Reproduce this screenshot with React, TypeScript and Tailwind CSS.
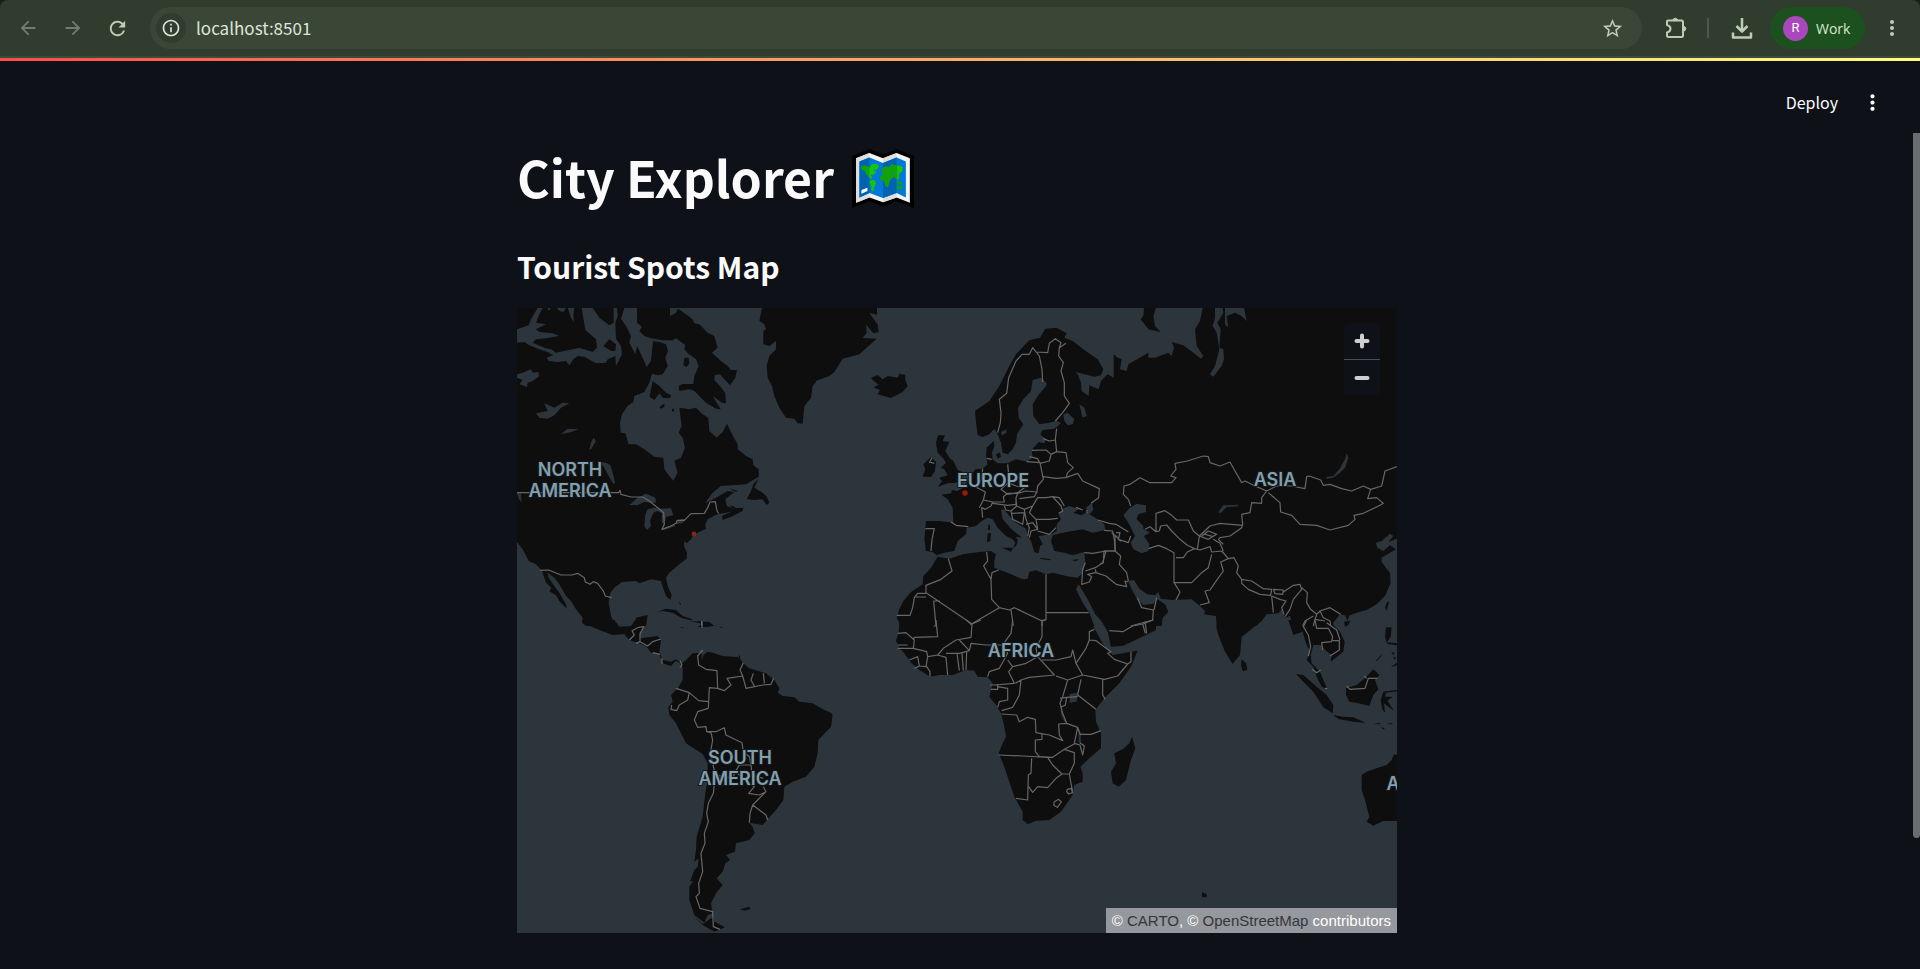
import {
  MdArrowBack,
  MdArrowForward,
  MdInfoOutline,
  MdMoreVert,
  MdRefresh,
  MdStarBorder,
} from 'react-icons/md';

type Tile = {
  x: number;
  y: number;
  land: string;
  water?: string;
  islands?: string;
  borders: string;
};

// The world map is split in tiles; path units are thirds of a map pixel, measured from the tile origin.
const tiles: Tile[] = [
  {
    // North America and western Greenland
    x: -3,
    y: -6,
    land: `M3,6 325,6 315,38 330,60 345,90 340,110 358,145 363,120 375,145 392,182 405,165 411,106 430,108 450,115 456,135 448,155 455,180 440,205 425,208 408,203 400,230 385,258 355,270 352,288 335,300 318,325 312,350 314,380 328,382 338,415 360,415 385,430 415,452 442,455 445,490 460,510 472,524 485,500 475,465 495,455 507,425 500,395 488,380 497,360 490,305 520,310 540,305 560,325 577,335 580,375 602,395 620,378 633,353 648,385 665,415 665,430 690,450 710,460 712,478 728,490 728,512 690,535 615,540 590,560 567,592 600,575 635,555 655,558 640,570 628,580 632,600 650,607 682,605 680,615 650,630 620,642 618,630 645,618 605,624 575,640 568,655 570,668 545,680 530,690 525,700 512,712 505,706 504,720 513,740 512,758 490,775 460,800 450,815 455,840 467,868 463,882 450,870 442,848 435,825 405,820 370,832 360,825 318,828 295,845 283,860 278,890 285,930 300,960 210,960 198,950 200,935 180,910 165,885 150,870 130,835 115,815 95,800 98,815 115,840 130,860 150,895 152,908 130,885 120,868 100,856 106,845 90,830 78,795 60,775 38,765 20,730 3,708Z
      M363,6 363,50 378,62 370,75 385,90 405,97 440,103 470,103 480,97 508,118 505,130 515,142 540,160 548,180 535,210 532,234 500,234 488,240 490,255 520,250 535,255 555,275 570,290 600,308 614,310 590,270 618,290 630,292 628,262 612,240 595,222 596,208 612,205 625,220 642,238 658,215 663,192 645,192 635,180 615,165 588,140 605,125 595,90 575,80 550,55 535,52 530,40 487,8 478,22 462,30 462,6Z
      M738,6 730,45 745,55 750,70 742,75 742,115 760,120 780,105 780,130 760,150 752,180 755,215 768,240 775,270 790,305 810,335 835,338 845,352 860,353 865,300 885,275 890,240 900,228 900,6Z
      M358,945 360,935 395,927 390,960 350,960Z`,
    water: `M65,6 45,40 38,58 3,70 3,110 25,108 40,118 75,132 95,138 112,148 92,155 98,165 125,168 150,165 160,178 172,160 185,150 205,152 240,172 270,170 275,160 298,150 300,180 318,145 315,120 300,98 298,50 305,30 303,6 293,6 293,50 280,58 250,35 240,20 230,6 197,6 208,72 240,100 243,125 230,138 190,125 120,140 105,130 85,125 50,110 60,100 90,97 130,90 110,82 70,78 60,70 90,55 60,50 70,25 80,6Z
      M155,6 165,35 174,48 172,25 175,6Z M95,6 98,15 105,6Z M122,6 130,14 142,18 150,6Z
      M3,205 20,200 45,190 50,200 68,198 68,212 50,225 35,230 33,243 10,235 20,222 3,215Z
      M60,322 95,315 85,292 115,305 140,290 160,292 135,305 115,328 95,338 70,335Z
      M135,385 155,368 188,370 165,378Z M225,410 232,395 240,405 225,430 220,430Z
      M252,468 265,485 278,510 292,533 297,530 290,500 283,478 270,470Z
      M3,560 15,563 17,590 8,578Z
      M340,597 365,575 390,563 418,575 420,590 405,590 385,588 365,597Z
      M388,625 395,610 415,605 430,608 465,607 472,628 450,632 445,655 437,648 438,622 425,615 412,620 402,645 405,660 393,672 385,660Z
      M435,672 455,662 475,655 478,660 455,668Z M482,645 498,638 510,640 498,652 480,655Z`,
    islands: `M262,120 280,100 300,115 298,135 285,135Z
      M410,225 430,240 450,260 465,268 462,277 440,275 430,262 415,282 400,272 405,250Z
      M430,303 445,293 445,303 435,308Z M468,308 475,308 473,318 468,316Z
      M505,155 518,155 520,172 512,183 502,178Z
      M728,517 715,545 740,560 752,572 760,590 752,597 740,580 715,582 692,580 705,555 712,535Z
      M638,546 665,555 660,558Z M640,598 660,604 650,608Z M490,885 495,895 492,898Z
      M423,918 450,908 480,912 500,930 530,940 525,943 495,935 470,920 440,915Z
      M540,945 580,948 595,960 550,960 558,952Z`,
    borders: `M3,560 308,560 312,553 315,565 345,573 380,573 400,585 425,605 443,620 445,655 438,670 460,662 480,652 483,643 505,643 525,623 565,622 575,605 582,588 598,587 603,615 608,622
      M72,793 98,792 135,807 168,807 185,802 205,815 208,828 222,835 232,827 245,832 262,855 268,870 287,875 M557,945V960`,
  },
  {
    // Europe, north Africa and eastern Greenland
    x: 897,
    y: -6,
    land: `M0,6V225L40,210 55,198 80,158 130,145 182,98 140,96 152,80 150,55 172,82 188,78 185,55 170,35 160,20 183,26 183,6Z
      M900,150 893,145 893,215 875,204 855,225 848,250 820,238 818,270 797,255 795,230 785,205 778,198 800,203 835,212 855,208 862,190 845,160 800,128 770,105 745,95 752,82 722,65 688,68 672,95 640,103 600,145 580,180 550,240 520,285 477,315 480,350 485,388 500,393 520,385 535,368 545,385 555,410 560,440 575,445 590,430 600,410 603,385 622,355 608,335 606,305 622,280 645,255 650,222 675,215 692,232 690,240 665,270 650,295 652,330 670,355 700,350 722,345 735,352 715,368 680,372 673,385 690,400 685,412 668,408 650,428 648,440 650,455 632,467 600,460 575,472 545,472 530,460 528,440 535,420 533,405 512,425 510,450 515,475 500,488 478,490 465,510 450,535 440,545 425,555 408,552 405,562 376,566 395,580 410,605 412,650 370,645 330,645 328,665 325,700 330,735 350,738 362,748 385,740 415,735 425,705 450,685 452,665 480,660 497,645 515,635 530,640 545,665 570,690 590,700 598,710 592,725 600,720 606,705 600,692 618,695 585,668 560,640 555,612 565,610 580,630 600,650 630,668 635,690 645,705 655,738 668,742 672,720 680,715 668,690 705,685 722,675 722,655 735,640 728,625 745,605 760,600 775,605 790,608 772,620 795,628 815,618 810,605 828,590 832,612 820,625 845,640 865,655 868,672 830,680 800,670 770,675 740,680 710,688 705,705 715,735 745,740 770,748 805,738 808,770 800,800 785,815 750,810 710,800 690,805 660,793 640,797 635,818 620,820 585,805 560,795 535,785 535,765 540,745 525,735 490,738 440,745 400,758 365,752 345,785 322,810 320,835 285,858 262,885 250,910 242,935 250,950V960H900Z`,
    water: `M768,828 780,850 788,835 800,855 815,880 838,925 860,950 865,960 835,960 820,920 800,890 783,855Z
      M555,378 572,370 570,382 558,388Z M742,325 755,320 775,340 770,355 755,358 745,345Z M790,295 805,305 812,330 800,335Z`,
    islands: `M165,215 185,207 200,220 215,210 245,215 250,203 268,207 268,222 275,240 260,258 225,276 185,265 192,252 172,244 188,236 170,222Z
      M366,388 387,388 380,405 400,408 388,435 400,455 412,465 425,492 440,498 438,515 420,530 395,532 365,543 378,525 370,515 395,508 385,490 375,485 390,470 380,455 365,440 360,410Z
      M322,475 345,453 360,468 357,495 345,513 320,512 328,490Z
      M558,725 592,725 585,737Z M515,682 525,682 523,705 513,708Z M517,655 522,658 522,672 516,672Z
      M672,755 705,760 700,763 674,759Z M768,762 790,759 780,766Z M540,445 552,440 555,452 545,458Z`,
    borders: `M545,380 553,350 555,320 550,280 572,262 578,215 600,165 618,145 640,145 650,125 660,138 695,140 700,112 718,98 735,110 730,125 750,112 M650,125 670,150 678,190 680,228 M730,125 728,150 742,170 735,195 745,230 745,270 760,292 740,320 718,345
      M722,368 718,400 722,437 705,445 690,432 648,433 M682,398 700,405 718,402 M722,437 750,440 755,470 772,485 755,500 750,515 720,517 682,512 M705,445 700,465 672,472 665,458 640,452 M632,467 672,470 678,500 682,520 665,540 662,562 M750,515 785,502 800,525 850,548 848,575 825,592
      M575,475 578,505 577,530 M512,457 527,460 M500,488 497,515 485,545 M470,540 490,548 508,558 502,582 490,605 M502,582 530,588 525,600 508,610 497,605 500,635 M530,588 565,588 562,572 575,562 605,562 600,575 600,595 575,598 530,592
      M577,530 555,550 575,565 605,560 625,545 600,540 577,530 M605,562 630,555 662,558 655,572 610,578 M600,578 602,600 625,610 650,600 665,575 690,575 710,572 735,600 740,615 728,622 M710,572 730,575 745,600 M650,600 640,620 660,640 700,640 725,637
      M565,600 570,612 585,615 602,600 M585,615 590,640 620,655 625,620 588,622 M625,610 630,640 640,665 635,690 M660,640 665,670 645,675 M665,675 700,685 720,665 M630,655 650,650 665,670 M645,675 640,695
      M405,648 420,658 457,662 M328,668 355,668 348,700 345,735
      M397,758 408,795 375,820 330,838 330,860 455,945 465,955 550,905 580,912 595,905 678,945 690,942 M330,862 305,862 295,875 290,905 282,928 242,928 M295,873H330 M512,738 515,765 503,780 525,820 528,800 548,792 M525,820 527,880 550,905 M690,805V942 M690,920H818 M353,960 360,960 353,885 372,885 M585,912 592,960 M678,945V960
      M805,740 830,742 870,735 900,735 M870,735 860,770 838,785 808,795 M838,790 840,800 870,810 900,835 M808,770 800,790 797,835 820,828 827,812 815,805 838,800 M845,642 880,652 900,655 M865,673 890,675 895,700 898,735 M780,604 800,612 M813,612V622 M340,470 348,455 M340,468 355,472`,
  },
  {
    // Asia
    x: 1749,
    y: -6,
    land: `M48,152 65,160 60,190 80,195 85,175 145,140 145,155 165,155 205,140 215,150 222,125 215,108 250,118 280,140 303,158 310,150 290,120 285,70 300,45 308,6 345,6 345,35 338,60 350,80 358,130 345,180 330,205 340,212 365,180 372,160 370,130 358,125 362,70 352,50 370,20 368,6 375,6 375,55 385,65 380,30 405,20 425,30 440,45 432,6 891,6 891,698 865,708 880,690 870,683 845,705 828,710 832,725 850,735 870,718 888,730 845,755 845,768 858,785 870,800 872,830 855,870 830,895 800,912 770,920 745,930 720,925 700,950 700,960 48,960Z
      M132,6 130,30 122,40 145,70 182,78 165,60 160,30 168,6Z`,
    water: `M85,825 102,822 118,848 142,865 165,868 175,858 182,878 215,882 275,880 300,900 315,915 312,925 348,930 350,960 185,960 188,935 205,918 195,895 172,880 160,893 130,897 112,880 95,850Z
      M468,960 485,945 500,925 535,922 545,910 555,935 570,930 578,960Z
      M70,628 90,605 110,593 138,598 138,618 115,625 110,640 130,660 130,668 150,680 132,690 148,715 145,735 125,742 100,730 92,710 105,690 85,650Z
      M355,618 370,598 415,596 415,601 380,603 362,622Z M740,442 745,455 735,485 720,500 700,515 680,518 678,513 700,510 718,490 735,460Z`,
    islands: `M868,885 860,915 855,905 860,890Z M735,928 748,930 742,945Z`,
    borders: `M48,655 65,665 85,678 M48,680 60,680 55,700 85,710 92,690 M35,680 50,692 62,706 M45,690 45,735 62,750 58,775 80,800 85,825 M45,735H12L10,770 0,775 M48,835 80,842 75,825 85,828
      M92,600 85,580 70,565 72,540 90,535 120,515 150,530 215,530 228,515 212,510 228,490 225,472 262,465 310,450 325,452 330,470 360,480 390,468 405,495 425,530 435,525 455,535 500,555 485,575 485,592 455,590 450,620 425,625 428,655 425,665 390,690 360,695 355,700
      M500,555 530,540 575,540 615,548 620,512 628,510 662,522 670,538 690,535 725,548 755,555 790,540 812,550 845,540 855,495 891,482 M505,560 540,590 542,618 575,628 600,655 650,658 690,672 745,658 765,640 762,628 790,622 840,598 850,592 830,575 803,578 812,550
      M168,675V622L195,614 215,628 230,642 265,642 280,675 298,690 330,660 360,652 428,658 M135,670 150,662 168,677 178,675 182,660 200,657 215,675 240,700 262,718 283,728 262,738 250,755 228,755 M145,728 175,718 200,728 222,740 222,830 240,858 228,882
      M283,728 300,732 330,722 335,738 365,735 M222,830H275L305,800 325,785 335,745 M365,735 385,758 362,768 370,795 345,830 330,852 315,855 328,890 300,897 M385,758 402,755 415,780 410,800 425,820
      M298,690 325,700 350,685 325,675 305,690 M298,690 292,730 M310,684 340,692 M340,700 360,712 370,735 M355,700 370,715
      M425,820 455,825 490,848 515,850 512,868 480,865 445,850 425,832Z M520,850 550,852 548,865 525,863Z M550,858 580,838 600,835 605,850 580,880 570,910 555,932 M515,870 540,880 558,885 545,905 552,925 M515,870 520,920
      M605,845 622,860 620,890 632,910 650,925 645,940 640,960 M650,925 660,915 690,905 722,925 M660,915 670,935 690,945 692,960 M640,930 615,945 608,960 M645,940 675,945 M112,875 125,905 160,912 158,942 92,960 M162,912 170,875`,
  },
  {
    // Central and South America
    x: -3,
    y: 936,
    land: `M198,0 215,15 250,30 290,45 325,43 340,60 365,68 390,78 405,98 430,103 440,130 465,138 480,122 492,130 500,143 500,180 485,205 465,225 470,245 457,262 460,285 480,310 510,370 560,402 575,430 575,480 568,520 560,590 542,650 540,690 535,725 548,715 545,740 535,750 522,785 532,782 520,800 520,840 535,885 565,908 575,885 590,880 585,850 600,820 620,795 602,775 620,755 628,730 642,720 630,705 657,695 660,670 700,660 716,640 710,620 700,608 740,615 755,598 780,570 802,540 805,500 830,485 870,470 895,440 905,400 907,360 945,320 950,285 945,278 920,268 890,250 850,245 835,232 800,228 785,218 790,205 775,180 750,160 700,145 680,128 670,112 620,108 590,98 575,95 562,105 558,120 556,98 530,100 510,120 498,130 480,118 465,125 440,120 430,95 435,60 425,48 375,55 370,40 388,15 388,0 358,0 345,18 310,20 295,0Z`,
    islands: `M533,888 560,912 592,890 595,905 627,922 595,935 560,915Z M672,868 700,860 703,868 685,872Z M520,2 555,5 592,17 580,20 545,22 560,12Z M608,20 620,21 618,24Z M492,21 506,23 498,25Z M667,106 673,108 670,114Z`,
    borders: `M340,60 355,45 348,32 368,22 383,20 372,42 372,65 360,70 M372,65 395,78 410,65 435,57 M410,98 432,103 M438,115V133 M492,122 498,135 492,143 M558,4V24
      M560,90 545,108 548,135 570,148 603,152 605,205 580,203 577,265 M480,205 520,218 548,242 577,245 M520,218 515,240 490,255 482,272 465,268 467,255 M577,265 545,275 535,300 545,322 570,320 572,335 585,338 M605,205 625,212 645,195 633,175 680,168 690,205 740,195 765,193 773,175 M682,128 672,150 680,168 M712,160 705,180 715,198 M742,160 745,190
      M585,338 590,360 583,400 590,430 598,465 592,520 577,550 572,580 577,605 565,640 567,670 555,700 560,755 548,790 550,820 540,830 552,865 590,875 592,920 612,928
      M572,335 600,335 625,323 630,345 678,368 682,395 700,410 705,435 670,435 658,455 650,475 598,465 M658,455 700,490 715,500 698,520 730,525 750,515 742,500 M705,435 708,465 742,475 M750,515 710,555 702,580 700,608 M710,555 750,585 755,600`,
  },
  {
    // Africa
    x: 1017,
    y: 936,
    land: `M130,0 130,18 127,40 120,62 130,85 145,100 165,128 190,150 222,170 250,165 290,165 330,150 355,152 365,170 395,172 410,190 400,230 420,255 435,280 445,320 450,350 440,370 428,400 445,440 458,480 475,530 500,575 500,600 515,613 540,602 580,600 615,575 650,525 655,495 680,485 680,460 673,440 700,415 735,385 735,340 720,305 718,270 745,235 790,190 825,140 845,92 800,100 770,105 755,90 740,70 715,25 705,0Z
      M735,0 755,35 765,80 800,78 870,45 900,30 900,0Z`,
    water: `M640,222 665,218 662,245 640,248 642,232Z M668,325 675,340 674,372 668,368Z M614,262 622,290 632,306 625,305 614,280Z`,
    islands: `M828,350 838,385 825,420 810,480 788,500 770,490 765,455 780,430 775,400 800,388 820,370Z`,
    borders: `M240,0 245,50 175,52 172,60 M125,40 150,38 175,60 172,85 125,85 M125,75 155,75 M172,85 212,95 215,110 210,140 190,138 M160,120 185,110 190,138 175,145 M215,110 245,105 262,85 300,60 345,52 348,12 375,0 M348,12 330,0 M245,105 270,112 275,165 M270,100H310L340,92 310,60 M303,100 310,152 M318,100 322,152 M332,95 330,150 M340,92 345,70 390,75 440,75 465,40 470,0 M212,140 222,155 222,170
      M440,75 455,100 430,145 400,155 395,170 M455,120 470,140 458,155 475,190 415,195 M470,140 510,130 545,110 540,85 558,50 558,0 570,0 M545,110 595,165 520,172 495,180 478,190 M558,120 600,120 645,110 650,90 660,130 680,165 635,180 600,168
      M660,130 690,85 700,60 720,62 765,95 755,100 775,118 815,132 785,168 745,178 680,165 M700,60 700,35 715,28 M825,95 825,125 815,132 M740,178 740,225 748,238 M675,178 665,225 720,268
      M635,180 620,230 612,250 620,280 632,310 608,312 610,345 620,362 580,345 540,338 538,298 515,292 490,305 482,285 437,282 M495,180 490,225 470,262 437,272 M402,195 425,195 425,208 405,208 M425,200 455,205 455,240 430,245 425,262 M612,235 632,232 628,255 615,262 M632,232 665,230
      M632,310 665,322 672,343 705,343 735,332 M665,322 655,370 672,375 680,405 685,378 672,368 M558,340 558,358 538,360 538,395 550,410 590,412 625,388 655,372 M428,405 500,408 575,412 M527,415 525,460 517,465 515,540 480,535 M575,412 590,435 618,462 600,475 575,503 545,500 530,517 518,500 M618,462 640,462 655,430 655,398 625,388 M640,462 645,490 650,515
      M595,545 608,538 616,546 604,562 593,556Z M634,508 645,505 650,518 638,522 632,515Z M760,32 800,35 830,18 860,12 892,0 M860,12 868,40`,
  },
  {
    // South-east Asia and Australia
    x: 1869,
    y: 936,
    land: `M0,0 0,47 25,30 66,10 66,0Z
      M228,18 235,45 255,95 278,132 300,105 305,50 325,35 348,16Z
      M445,0 460,45 488,35 498,70 510,95 500,120 520,140 530,170 545,200 562,208 550,180 540,155 515,130 512,105 520,75 545,75 555,90 575,105 572,125 610,95 614,65 600,35 570,5 580,0Z
      M771,405 762,403 755,420 740,435 710,445 680,455 665,465 665,510 675,540 688,590 680,605 700,617 730,603 771,603Z`,
    islands: `M305,118 318,130 322,150 308,153 303,135Z M612,5 632,2 625,15 615,20Z
      M468,162 490,165 530,200 560,225 580,255 578,280 550,262 520,215 490,185Z
      M580,285 610,290 640,292 678,308 640,305 595,297Z M700,312 720,309 720,313Z M738,312 758,309 756,313Z M722,321 735,325 730,328Z
      M618,205 650,195 680,170 700,148 718,165 705,180 715,208 700,225 688,258 655,250 628,245 618,225Z
      M738,22 755,22 752,50 740,68 735,50Z M740,67 771,70 771,76 742,72Z M707,123 725,103 724,108 710,124Z M754,96 764,98 760,106Z M760,110 768,112 764,120Z M752,142 771,128 771,136Z
      M730,215 771,210 771,214 738,218 735,230 758,230 742,242 762,272 745,260 732,250 735,278 727,268 722,240Z
      M186,817 200,823 200,832 186,832Z`,
    borders: `M15,5 20,40 M500,0 490,20 505,45 512,80 505,108 M525,0 530,25 565,25 578,50 575,65 545,68 548,90 M578,62 598,62 598,90 570,108 M560,8 590,30 600,60 M517,148 530,158 542,150 M555,205 562,206 M620,198 630,208 675,205 685,175 712,175 M672,168 680,175`,
  },
];

const labels = [
  { text: 'NORTH', x: 53, y: 168 },
  { text: 'AMERICA', x: 53, y: 189 },
  { text: 'EUROPE', x: 476, y: 179 },
  { text: 'ASIA', x: 758, y: 178 },
  { text: 'AFRICA', x: 504, y: 349 },
  { text: 'SOUTH', x: 223, y: 456 },
  { text: 'AMERICA', x: 223, y: 477 },
  { text: 'A', x: 876, y: 482 },
];

function WorldMap() {
  return (
    <svg viewBox="0 0 880 625" className="block h-auto w-full bg-[#2c353c]" role="img" aria-label="Tourist spots">
      {tiles.map((t) => (
        <g key={`${t.x},${t.y}`} transform={`scale(0.333333) translate(${t.x} ${t.y})`}>
          <path d={t.land} fill="#0e0e0e" />
          {t.water && <path d={t.water} fill="#2c353c" />}
          {t.islands && <path d={t.islands} fill="#0e0e0e" />}
        </g>
      ))}
      {tiles.map((t) => (
        <g key={`${t.x},${t.y}`} transform={`scale(0.333333) translate(${t.x} ${t.y})`}>
          <path d={t.borders} fill="none" stroke="#676767" strokeWidth="3.6" strokeLinejoin="round" />
        </g>
      ))}
      <circle cx="177" cy="226" r="2.4" fill="#8c2317" />
      <circle cx="448" cy="185" r="2.7" fill="#9a1a08" />
      {labels.map((l) => (
        <text
          key={`${l.text}${l.y}`}
          x={l.x}
          y={l.y}
          textAnchor="middle"
          className="fill-[#819fae] stroke-[#15191b] stroke-2 font-['Inter','Liberation_Sans',sans-serif] text-[18px] font-semibold [paint-order:stroke]"
        >
          {l.text}
        </text>
      ))}
    </svg>
  );
}

function FoldedMap() {
  return (
    <svg viewBox="0 0 186 178" className="mt-1 h-[59px] w-[62px]" role="img" aria-label="World map">
      <path d="M0,20 52,0 93,16 134,0 186,20V178L134,158 93,174 52,158 0,178Z" fill="#000" />
      <path d="M12,28 52,12 93,28 134,12 174,28V162L134,146 93,161 52,146 12,162Z" fill="#f4f4f4" />
      <path d="M12,28 52,12V146L12,162Z M93,28 134,12V146L93,161Z" fill="#dedede" />
      <path d="M22,38 52,26 93,42 134,26 162,38V146L134,133 93,148 52,133 22,146Z" fill="#0078d7" />
      <path d="M22,38 52,26V133L22,146Z M93,42 134,26V133L93,148Z" fill="#0063b1" />
      <path
        d="M27,52 40,50 52,54 60,46 78,46 80,54 72,64 70,74 60,78 54,76 60,88 54,90 42,76 38,66 27,62Z M56,94 68,94 72,104 66,116 64,128 58,124 58,110 52,102Z M88,62 100,52 112,54 118,46 140,50 152,54 152,66 142,74 140,92 134,92 126,84 114,94 108,116 100,112 96,98 84,92 84,82 92,78Z M132,96 150,100 148,108 136,104Z M134,112 152,110 150,122 134,120Z"
        fill="#13a10e"
      />
      <path d="M60,46 78,46 80,54 72,64 70,74 60,78 56,76 60,88 56,90 52,84 52,58Z M56,94 68,94 72,104 66,116 64,128 58,124 58,110 52,102Z M136,49 152,54 152,66 142,74 140,92 136,92Z" fill="#16c60c" />
      <path d="M66,60 72,66 66,68Z M118,74 126,72 122,78Z" fill="#0078d7" />
      <path d="M28,124 46,117V127L28,135Z" fill="#fff" />
    </svg>
  );
}

function BrowserBar() {
  return (
    <div className="bg-[#182117]">
      <nav aria-label="Browser" className="flex h-[58px] items-center rounded-t-lg border-b-2 border-[#3d493a] bg-[#303c2d] pl-[5px] text-[#bccdb6]">
        <button aria-label="Back" className="flex w-[45px] justify-center text-[#727d6d]">
          <MdArrowBack size={22} />
        </button>
        <button aria-label="Forward" className="flex w-[45px] justify-center text-[#727d6d]">
          <MdArrowForward size={22} />
        </button>
        <button aria-label="Reload" className="flex w-[45px] justify-center">
          <MdRefresh size={23} />
        </button>
        <div className="ml-[10px] flex h-[42px] flex-1 items-center rounded-full bg-[#3b4736] pr-[18px] pl-[6px]">
          <button aria-label="Site information" className="flex size-[30px] items-center justify-center rounded-full bg-[#303c2d] text-[#dfe4da]">
            <MdInfoOutline size={20} />
          </button>
          <input
            aria-label="Address"
            defaultValue="localhost:8501"
            className="ml-[10px] min-w-0 flex-1 bg-transparent font-['Noto_Sans_CJK_SC','Noto_Sans',sans-serif] text-[17px] text-[#dfe4da] outline-none"
          />
          <button aria-label="Bookmark this page" className="text-[#c4c8bf]">
            <MdStarBorder size={23} />
          </button>
        </div>
        <button aria-label="Extensions" className="ml-[11px] flex w-[46px] justify-center">
          <svg viewBox="0 0 24 24" className="size-6" fill="none" stroke="currentColor" strokeWidth="2" strokeLinejoin="round">
            <path d="M4 4.500H17.500Q19 4.500 19 6V19.500Q19 21 17.500 21H4.500Q3 21 3 19.500V16.500Q6.500 15.600 6.500 12.700Q6.500 9.800 3 9V5.500Q3 4.500 4 4.500Z" />
            <path d="M9 4A2.300 2.300 0 0 1 13.500 4Z M20 10.500A2.300 2.300 0 0 1 20 15Z" fill="currentColor" strokeWidth="1" />
          </svg>
        </button>
        <span className="ml-2 h-5 w-[2px] rounded bg-[#4b5b46]" />
        <button aria-label="Downloads" className="ml-[10px] flex w-[46px] justify-center">
          <svg viewBox="0 0 24 24" className="size-6" fill="none" stroke="currentColor" strokeWidth="2.500" strokeLinejoin="round">
            <path d="M12 2V15 M6.500 10 12 15.500 17.500 10 M3 16.500V21.500H21V16.500" />
          </svg>
        </button>
        <button className="ml-[5px] flex h-[42px] w-[95px] items-center gap-2 rounded-full bg-[#1d501f] pl-[13px] font-['Open_Sans','Noto_Sans',sans-serif] text-[14px] text-[#d5ead0]">
          <span className="flex size-[25px] items-center justify-center rounded-full bg-[#ab47bc] font-['Roboto',sans-serif] text-[13px] text-white">
            R
          </span>
          Work
        </button>
        <button aria-label="Browser menu" className="mr-4 ml-[15px]">
          <MdMoreVert size={24} />
        </button>
      </nav>
    </div>
  );
}

export default function App() {
  return (
    <div className="relative flex min-h-screen flex-col bg-[#0e1117] font-['Noto_Sans_CJK_SC','Noto_Sans',sans-serif] text-[#fafafa]">
      <BrowserBar />
      <div className="h-[3px] bg-linear-to-r from-[#ff4b4b] to-[#fffd80]" />
      <header className="flex h-[82px] items-center justify-end gap-[22px] pr-[35px]">
        <button className="text-[16px]">Deploy</button>
        <button aria-label="Main menu">
          <MdMoreVert size={25} />
        </button>
      </header>
      <div className="pr-[6px]">
        <main className="mx-auto w-full max-w-[880px]">
          <h1 className="flex h-[66px] items-center gap-[18px] text-[50px] leading-[66px] font-bold">
            City Explorer
            <FoldedMap />
          </h1>
          <h2 className="mt-[34px] mb-[18px] text-[30px] leading-[47px] font-bold">Tourist Spots Map</h2>
          <div className="relative overflow-hidden">
            <WorldMap />
            <div className="absolute top-[15px] right-[17px] flex w-9 flex-col rounded bg-[#0e1117]">
              <button aria-label="Zoom in" className="flex h-9 items-center justify-center">
                <svg viewBox="0 0 16 16" className="size-4" stroke="#cfcfcf" strokeWidth="4" strokeLinecap="round">
                  <path d="M8 2.500V13.500M2.500 8H13.500" />
                </svg>
              </button>
              <button aria-label="Zoom out" className="flex h-9 items-center justify-center border-t border-[#4c4e53]">
                <svg viewBox="0 0 16 16" className="size-4" stroke="#cfcfcf" strokeWidth="4" strokeLinecap="round">
                  <path d="M2.500 8H13.500" />
                </svg>
              </button>
            </div>
            <p className="absolute right-0 bottom-0 bg-[#95989d] px-[6px] font-['Liberation_Sans',sans-serif] text-[15px] leading-[25px] text-white">
              © <a href="#carto" className="text-[#34373b]">CARTO</a>, © <a href="#openstreetmap" className="text-[#34373b]">OpenStreetMap</a> contributors
            </p>
          </div>
        </main>
      </div>
      <div className="absolute top-[133px] right-0 h-[705px] w-[7px] rounded-b bg-[#6b6c70]" />
    </div>
  );
}
